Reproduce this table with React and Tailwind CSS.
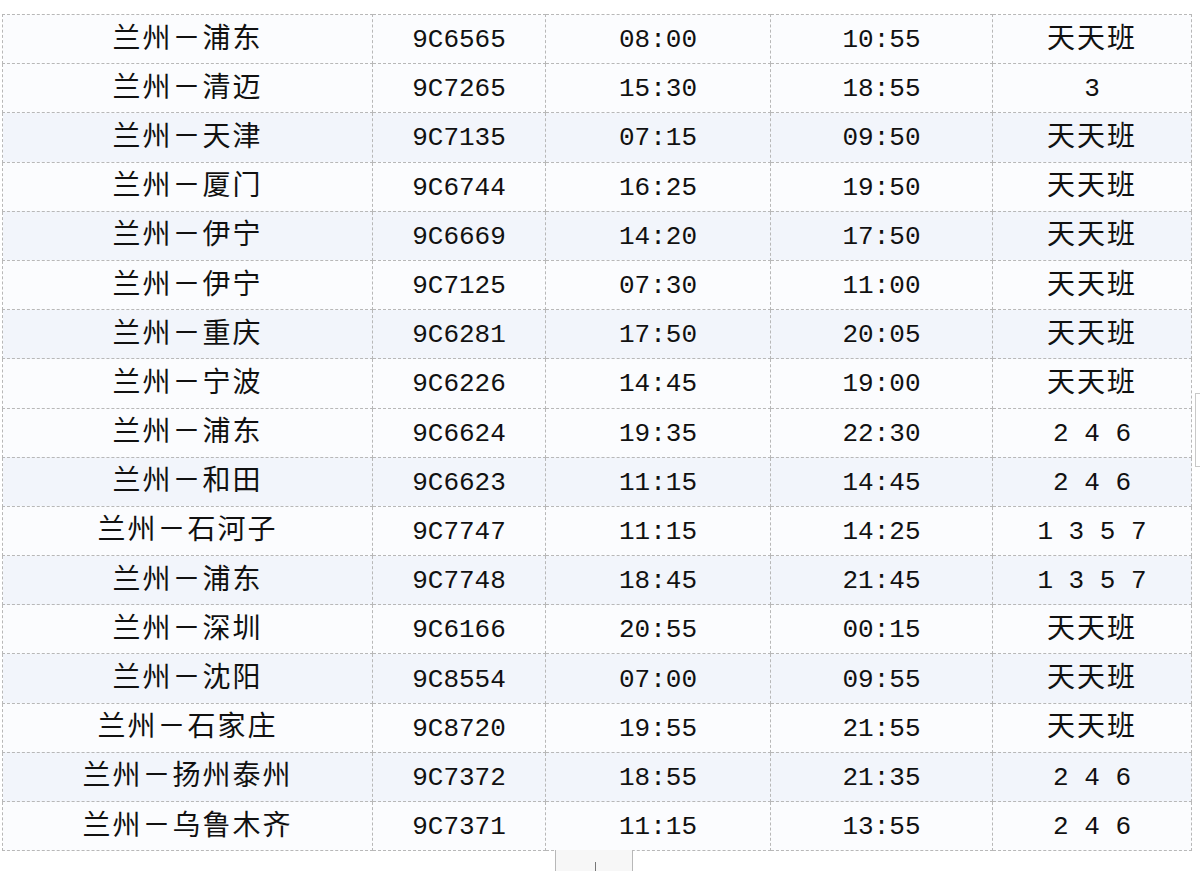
const rows = [
  ['兰州－浦东', '9C6565', '08:00', '10:55', '天天班', false],
  ['兰州－清迈', '9C7265', '15:30', '18:55', '3', false],
  ['兰州－天津', '9C7135', '07:15', '09:50', '天天班', true],
  ['兰州－厦门', '9C6744', '16:25', '19:50', '天天班', false],
  ['兰州－伊宁', '9C6669', '14:20', '17:50', '天天班', true],
  ['兰州－伊宁', '9C7125', '07:30', '11:00', '天天班', false],
  ['兰州－重庆', '9C6281', '17:50', '20:05', '天天班', true],
  ['兰州－宁波', '9C6226', '14:45', '19:00', '天天班', false],
  ['兰州－浦东', '9C6624', '19:35', '22:30', '2 4 6', false],
  ['兰州－和田', '9C6623', '11:15', '14:45', '2 4 6', true],
  ['兰州－石河子', '9C7747', '11:15', '14:25', '1 3 5 7', false],
  ['兰州－浦东', '9C7748', '18:45', '21:45', '1 3 5 7', true],
  ['兰州－深圳', '9C6166', '20:55', '00:15', '天天班', false],
  ['兰州－沈阳', '9C8554', '07:00', '09:55', '天天班', true],
  ['兰州－石家庄', '9C8720', '19:55', '21:55', '天天班', false],
  ['兰州－扬州泰州', '9C7372', '18:55', '21:35', '2 4 6', true],
  ['兰州－乌鲁木齐', '9C7371', '11:15', '13:55', '2 4 6', false],
]

const mono = { fontFamily: '"Liberation Mono", "Noto Sans CJK SC", monospace' }

function Cjk({ children }) {
  return <span className="text-[28px] tracking-[2px]">{children}</span>
}

function Cell({ children }) {
  return (
    <td className="h-[49.2px] border border-dashed border-[#b8b8b8] p-0 pt-[3px] text-center align-middle">
      {children}
    </td>
  )
}

export default function App() {
  return (
    <div className="relative h-[871px] w-[1200px] overflow-hidden bg-white text-[26px] text-[#111]" style={mono}>
      <div className="pl-[2px] pt-[14px]">
        <table className="w-[1189px] table-fixed border-collapse">
          <colgroup>
            <col className="w-[370px]" />
            <col className="w-[173px]" />
            <col className="w-[225px]" />
            <col className="w-[222px]" />
            <col className="w-[199px]" />
          </colgroup>
          <tbody>
            {rows.map(([route, flight, dep, arr, freq, blue], i) => (
              <tr key={i} className={blue ? 'bg-[#f2f5fb]' : 'bg-[#fbfcfe]'}>
                <Cell><Cjk>{route}</Cjk></Cell>
                <Cell>{flight}</Cell>
                <Cell>{dep}</Cell>
                <Cell>{arr}</Cell>
                <Cell>{freq === '天天班' ? <Cjk>{freq}</Cjk> : <span className="whitespace-pre">{freq}</span>}</Cell>
              </tr>
            ))}
          </tbody>
        </table>
      </div>

      {/* cut-off scroll handle below the table */}
      <div className="absolute left-[555px] top-[850px] h-[21px] w-[78px] border-x border-[#b8b8b8] bg-[#f7f7f7]">
        <div className="ml-[39px] mt-[12px] h-[9px] w-px bg-[#777]" />
      </div>

      {/* cut-off element at the right edge */}
      <div className="absolute left-[1195px] top-[393px] h-[74px] w-[5px] border-l border-y border-[#c8c8c8]" />
    </div>
  )
}
